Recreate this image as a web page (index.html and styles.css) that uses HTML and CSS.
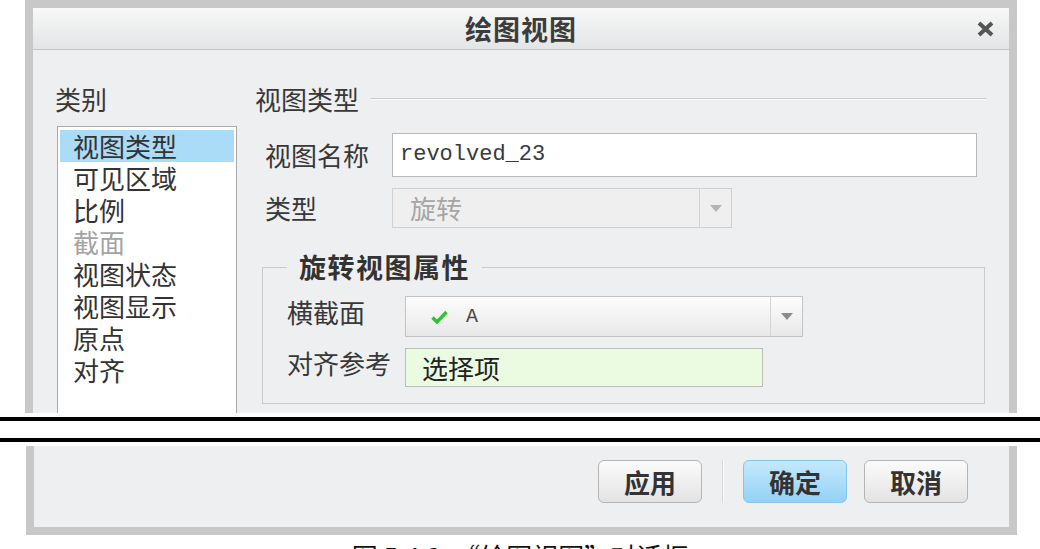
FILE: index.html
```html
<!DOCTYPE html>
<html lang="zh-CN">
<head>
    <meta charset="UTF-8">
    <meta name="viewport" content="width=device-width, initial-scale=1.0">
    <title>绘图视图</title>
    <link rel="stylesheet" href="styles.css">
</head>

<body>
<div class="dlg dlg-top">
    <div class="title-bar">
        <span class="title">绘图视图</span>
        <span class="close">
            <svg width="19" height="18" viewBox="0 0 19 18">
                <path d="M3 3 L16 15 M16 3 L3 15" stroke="#555" stroke-width="4" fill="none"/>
            </svg>
        </span>
    </div>
    <div class="dlg-body">
        <div class="side">
            <div class="side-label">类别</div>
            <ul class="cat-list">
                <li class="on">视图类型</li>
                <li>可见区域</li>
                <li>比例</li>
                <li class="off">截面</li>
                <li>视图状态</li>
                <li>视图显示</li>
                <li>原点</li>
                <li>对齐</li>
            </ul>
        </div>
        <div class="main">
            <div class="sec-head">
                <span>视图类型</span>
                <i class="rule"></i>
            </div>
            <div class="row row-name">
                <label>视图名称</label>
                <div class="field name-field">revolved_23</div>
            </div>
            <div class="row row-type">
                <label>类型</label>
                <div class="combo type-combo">
                    <span class="val">旋转</span>
                    <span class="arrow"></span>
                </div>
            </div>
            <fieldset class="group">
                <legend>旋转视图属性</legend>
                <div class="row">
                    <label>横截面</label>
                    <div class="combo cross-combo">
                        <span class="val">
                            <svg width="17" height="14" viewBox="0 0 17 14">
                                <path d="M1.5 7.5 L6 12 L15.5 2" stroke="#2fc42f" stroke-width="3.4" fill="none"/>
                            </svg>
                            <span class="mono">A</span>
                        </span>
                        <span class="arrow"></span>
                    </div>
                </div>
                <div class="row row-pick">
                    <label>对齐参考</label>
                    <div class="field pick-field">选择项</div>
                </div>
            </fieldset>
        </div>
    </div>
</div>

<div class="cut"></div>

<div class="dlg dlg-bottom">
    <button class="btn">应用</button>
    <span class="sep"></span>
    <button class="btn btn-ok">确定</button>
    <button class="btn">取消</button>
</div>

<p class="caption">图 5.4.3　“绘图视图”对话框</p>
</body>
</html>
```

FILE: styles.css
```css
* {
    box-sizing: border-box;
}

body {
    margin: 0;
    width: 1040px;
    height: 549px;
    overflow: hidden;
    background: #fff;
    font-family: "Noto Sans CJK SC", "Liberation Sans", sans-serif;
    color: #383838;
}

ul {
    margin: 0;
    padding: 0;
    list-style: none;
}

.dlg {
    background: #eeeff1;
    border: 8px solid #c8c8c8;
}

/* 上半截 (下边被截掉) */
.dlg-top {
    margin-left: 25px;
    width: 992px;
    height: 413px;
    border-bottom: 0;
    overflow: hidden;
    display: flex;
    flex-direction: column;
}

.title-bar {
    height: 42px;
    flex: none;
    display: grid;
    grid-template-columns: 1fr auto 1fr;
    align-items: center;
    background: linear-gradient(#f8f8f8, #e3e4e6);
    border-bottom: 1px solid #c4c4c4;
}
.title-bar .title {
    grid-column: 2;
    font-size: 27px;
    font-weight: bold;
    letter-spacing: 1px;
    line-height: 1;
    color: #3c3c3c;
}
.title-bar .close {
    grid-column: 3;
    justify-self: end;
    margin-right: 14px;
    display: flex;
}

.dlg-body {
    flex: 1;
    min-height: 0;
    display: flex;
    padding: 33px 23px 0 22px;
}

.side {
    width: 182px;
    flex: none;
    display: flex;
    flex-direction: column;
}
.side-label {
    font-size: 26px;
    line-height: 32px;
}

.cat-list {
    flex: none;
    height: 330px;
    margin: 11px 0 0 2px;
    padding: 3px 2px;
    border: 1px solid #a9a9a9;
    background: #fff;
}
.cat-list li {
    font-size: 26px;
    line-height: 32px;
    padding-left: 13px;
    color: #333;
    white-space: nowrap;
}
.cat-list li.on {
    background: #aadbf7;
}
.cat-list li.off {
    color: #a3a3a3;
}

.main {
    flex: 1;
    min-width: 0;
    margin-left: 18px;
}

.sec-head {
    display: flex;
    align-items: center;
    font-size: 26px;
    line-height: 32px;
}
.sec-head .rule {
    flex: 1;
    margin-left: 11px;
    border-top: 1px solid #cdcdcd;
    border-bottom: 1px solid #fafafa;
}

.row {
    display: flex;
    align-items: center;
    font-size: 26px;
    line-height: 32px;
}
.row label {
    flex: none;
}

.row-name {
    margin: 18px 9px 0 10px;
}
.row-name label,
.row-type label {
    width: 127px;
}
.row-type {
    margin: 11px 9px 0 10px;
}

.field {
    display: flex;
    align-items: center;
    border: 1px solid #b9b9b9;
}
.name-field {
    flex: 1;
    height: 44px;
    padding-left: 7px;
    background: #fff;
    font-family: "Liberation Mono", monospace;
    font-size: 22px;
    color: #3a3a3a;
}

.combo {
    display: flex;
    border: 1px solid #cfcfcf;
}
.combo .val {
    flex: 1;
    display: flex;
    align-items: center;
}
.combo .arrow {
    width: 32px;
    display: flex;
    align-items: center;
    justify-content: center;
    border-left: 1px solid #d3d3d3;
}
.combo .arrow::after {
    content: "";
    border-left: 6px solid transparent;
    border-right: 6px solid transparent;
    border-top: 7px solid #8c8c8c;
}

.type-combo {
    width: 340px;
    height: 40px;
    background: #efefef;
}
.type-combo .val {
    padding-left: 17px;
    color: #a6a6a6;
}
.type-combo .arrow::after {
    border-top-color: #b4b4b4;
}

.group {
    margin: 24px 1px 0 7px;
    padding: 14px 0 16px 24px;
    border: 1px solid #cbcbcb;
    min-width: 0;
}
.group legend {
    padding: 0 12px;
    font-size: 27px;
    font-weight: bold;
    letter-spacing: 1.5px;
    line-height: 30px;
    color: #333;
}
.group .row label {
    width: 118px;
    line-height: 28px;
    padding-bottom: 10px;
}

.cross-combo {
    width: 398px;
    height: 41px;
    border-color: #c3c3c3;
    background: linear-gradient(#fdfdfd, #e8e8e8);
}
.cross-combo .val {
    padding-left: 25px;
}
.cross-combo .mono {
    margin-left: 18px;
    font-family: "Liberation Mono", monospace;
    font-size: 20px;
    color: #4a4a4a;
}

.row-pick {
    margin-top: 11px;
}
.pick-field {
    width: 358px;
    height: 39px;
    padding-left: 16px;
    background: #ebfbe1;
    border-color: #bdbdbd;
    color: #222;
}

/* 截断线 */
.cut {
    margin: 4px 0;
    height: 25px;
    border-top: 4px solid #000;
    border-bottom: 4px solid #000;
}

/* 下半截 */
.dlg-bottom {
    margin-left: 26px;
    width: 991px;
    height: 89px;
    border-top: 0;
    display: flex;
    justify-content: flex-end;
    align-items: flex-start;
    padding: 14px 41px 0 0;
}

.btn {
    width: 104px;
    height: 43px;
    padding: 0;
    border: 1px solid #b4b4b4;
    border-radius: 6px;
    background: linear-gradient(#fbfbfb, #e3e3e3);
    font-family: inherit;
    font-size: 26px;
    font-weight: bold;
    color: #333;
}
.btn + .btn {
    margin-left: 17px;
}
.btn-ok {
    border-color: #86c4ea;
    background: linear-gradient(#c4e8fd, #94d2f6);
}

.sep {
    width: 1px;
    height: 43px;
    margin: 0 20px;
    background: #d6d6d6;
    box-shadow: 1px 0 #fafafa;
}

.caption {
    margin: 5px 0 0;
    text-align: center;
    font-size: 26px;
    line-height: 32px;
    color: #111;
}
```
